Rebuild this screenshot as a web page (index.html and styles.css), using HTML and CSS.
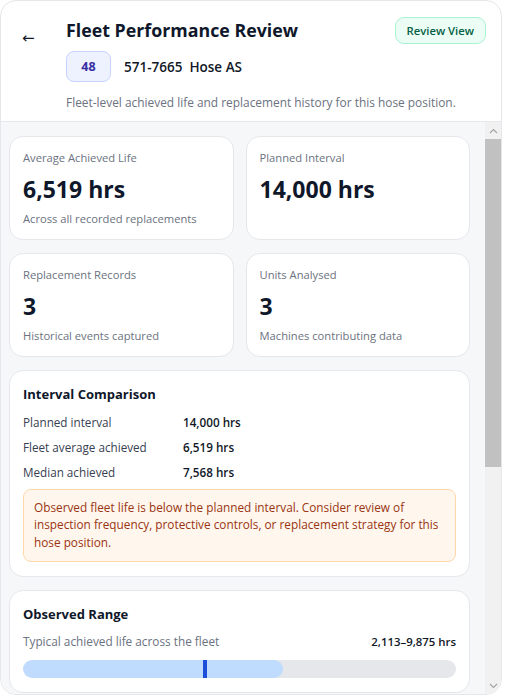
FILE: index.html
```html
<!DOCTYPE html>
<html lang="en">
<head>
<meta charset="utf-8">
<title>Fleet Performance Review</title>
<link rel="stylesheet" href="styles.css">
</head>
<body>
<div class="panel">
  <header class="head">
    <button class="back" type="button" aria-label="Back">←</button>
    <div class="head-main">
      <div class="title-row">
        <h1 class="title">Fleet Performance Review</h1>
        <span class="badge">Review View</span>
      </div>
      <div class="meta">
        <span class="chip">48</span>
        <span class="part">571-7665&nbsp; Hose AS</span>
      </div>
      <p class="sub">Fleet-level achieved life and replacement history for this hose position.</p>
    </div>
  </header>

  <div class="body-row">
    <div class="scroll">
      <div class="content">
        <div class="stats">
          <div class="card stat">
            <div class="stat-label">Average Achieved Life</div>
            <div class="stat-value">6,519 hrs</div>
            <div class="stat-note">Across all recorded replacements</div>
          </div>
          <div class="card stat">
            <div class="stat-label">Planned Interval</div>
            <div class="stat-value">14,000 hrs</div>
          </div>
          <div class="card stat">
            <div class="stat-label">Replacement Records</div>
            <div class="stat-value">3</div>
            <div class="stat-note">Historical events captured</div>
          </div>
          <div class="card stat">
            <div class="stat-label">Units Analysed</div>
            <div class="stat-value">3</div>
            <div class="stat-note">Machines contributing data</div>
          </div>
        </div>

        <section class="card section">
          <h2 class="section-title">Interval Comparison</h2>
          <dl class="compare">
            <dt>Planned interval</dt><dd>14,000 hrs</dd>
            <dt>Fleet average achieved</dt><dd>6,519 hrs</dd>
            <dt>Median achieved</dt><dd>7,568 hrs</dd>
          </dl>
          <p class="warning">Observed fleet life is below the planned interval. Consider review of inspection frequency, protective controls, or replacement strategy for this hose position.</p>
        </section>

        <section class="card section">
          <h2 class="section-title">Observed Range</h2>
          <div class="range-row">
            <span class="range-label">Typical achieved life across the fleet</span>
            <span class="range-value">2,113–9,875 hrs</span>
          </div>
          <div class="bar">
            <div class="bar-fill" style="width: 60%;"></div>
            <div class="bar-mark" style="left: 41.6%;"></div>
          </div>
        </section>
      </div>
    </div>

    <div class="scrollbar" aria-hidden="true">
      <span class="sb-btn">
        <svg width="9" height="6" viewBox="0 0 9 6"><path d="M1 5 L4.5 1.5 L8 5" fill="none" stroke="#a3a3a3" stroke-width="1.1"/></svg>
      </span>
      <span class="sb-track"><span class="sb-thumb"></span></span>
      <span class="sb-btn">
        <svg width="9" height="6" viewBox="0 0 9 6"><path d="M1 1 L4.5 4.5 L8 1" fill="none" stroke="#a3a3a3" stroke-width="1.1"/></svg>
      </span>
    </div>
  </div>
</div>
</body>
</html>
```

FILE: styles.css
```css
* { box-sizing: border-box; }

html, body {
  margin: 0;
  padding: 0;
  background: #ffffff;
}

body {
  font-family: "Open Sans", "Noto Sans", "Liberation Sans", sans-serif;
  color: #111827;
}

.panel {
  width: 502px;
  height: 695px;
  border: 1px solid #e5e7eb;
  border-radius: 16px;
  overflow: hidden;
  display: flex;
  flex-direction: column;
  background: #ffffff;
}

/* Header */
.head {
  display: flex;
  align-items: flex-start;
  padding: 15px 15px 10px 0;
  border-bottom: 1px solid #e5e7eb;
  flex: none;
}

.back {
  width: 65px;
  margin: 0;
  padding: 12px 0 0 21px;
  border: 0;
  background: none;
  font-family: "DejaVu Sans", sans-serif;
  font-size: 15px;
  line-height: 20px;
  color: #111827;
  text-align: left;
  cursor: pointer;
}

.head-main {
  flex: 1;
  min-width: 0;
}

.title-row {
  display: flex;
  align-items: center;
  justify-content: space-between;
  height: 28px;
}

.title {
  margin: 0;
  font-size: 17.8px;
  font-weight: 700;
  line-height: 26px;
  color: #0f172a;
}

.badge {
  display: inline-flex;
  align-items: center;
  height: 27px;
  padding: 0 11px;
  border: 1px solid #a7f3d0;
  border-radius: 9px;
  background: #ecfdf5;
  color: #065f46;
  font-size: 11.3px;
  font-weight: 600;
}

.meta {
  display: flex;
  align-items: center;
  gap: 13px;
  margin-top: 7px;
}

.chip {
  display: inline-flex;
  align-items: center;
  justify-content: center;
  width: 45px;
  height: 31px;
  border: 1px solid #c7d2fe;
  border-radius: 8px;
  background: #eef2ff;
  color: #3730a3;
  font-size: 12.5px;
  font-weight: 700;
}

.part {
  font-size: 13.5px;
  font-weight: 600;
  color: #111827;
}

.sub {
  margin: 11px 0 0;
  font-size: 11.9px;
  line-height: 18px;
  color: #6b7280;
}

/* Body with scroll pane and scrollbar */
.body-row {
  flex: 1;
  min-height: 0;
  display: flex;
}

.scroll {
  flex: 1;
  min-width: 0;
  overflow: hidden;
  background: #f6f7f9;
}

.scrollbar {
  flex: none;
  width: 16px;
  display: flex;
  flex-direction: column;
  background: #f1f1f1;
}

.sb-btn {
  flex: none;
  height: 17px;
  display: flex;
  align-items: center;
  justify-content: center;
}

.sb-track {
  flex: 1;
  display: flex;
  flex-direction: column;
}

.sb-thumb {
  height: 328px;
  background: #c1c1c1;
}

.content {
  padding: 14px 15px 16px 8px;
  display: flex;
  flex-direction: column;
  gap: 13px;
}

.card {
  background: #ffffff;
  border: 1px solid #e5e7eb;
  border-radius: 14px;
}

/* Stats */
.stats {
  display: grid;
  grid-template-columns: 1fr 1fr;
  gap: 13px 12px;
}

.stat {
  padding: 13px 13px 12px;
  min-height: 104px;
}

.stat-label {
  font-size: 11.2px;
  line-height: 16px;
  color: #6b7280;
}

.stat-value {
  margin-top: 8px;
  font-size: 23px;
  font-weight: 700;
  line-height: 30px;
  color: #0f172a;
}

.stat-note {
  margin-top: 7px;
  font-size: 11.2px;
  line-height: 16px;
  color: #6b7280;
}

/* Sections */
.section {
  padding: 13px 13px 14px;
}

.section-title {
  margin: 0;
  font-size: 13px;
  font-weight: 700;
  line-height: 20px;
  color: #0f172a;
}

.compare {
  display: grid;
  grid-template-columns: 160px 1fr;
  row-gap: 8px;
  margin: 10px 0 0;
  font-size: 11.7px;
  line-height: 17px;
}

.compare dt {
  color: #374151;
}

.compare dd {
  margin: 0;
  font-weight: 600;
  color: #111827;
}

.warning {
  margin: 8px 0 0;
  padding: 9px 10px 10px;
  border: 1px solid #fed7aa;
  border-radius: 8px;
  background: #fff7ed;
  color: #9a3412;
  font-size: 11.8px;
  line-height: 17.3px;
}

.range-row {
  display: flex;
  justify-content: space-between;
  align-items: center;
  margin-top: 9px;
  font-size: 11.8px;
  line-height: 17px;
}

.range-label {
  color: #6b7280;
}

.range-value {
  font-size: 11.4px;
  font-weight: 600;
  color: #111827;
}

.bar {
  position: relative;
  margin-top: 10px;
  height: 18px;
  border-radius: 9px;
  background: #e5e7eb;
  overflow: hidden;
}

.bar-fill {
  height: 100%;
  border-radius: 9px;
  background: #bfdbfe;
}

.bar-mark {
  position: absolute;
  top: 0;
  width: 4px;
  height: 100%;
  background: #1d4ed8;
}
```
